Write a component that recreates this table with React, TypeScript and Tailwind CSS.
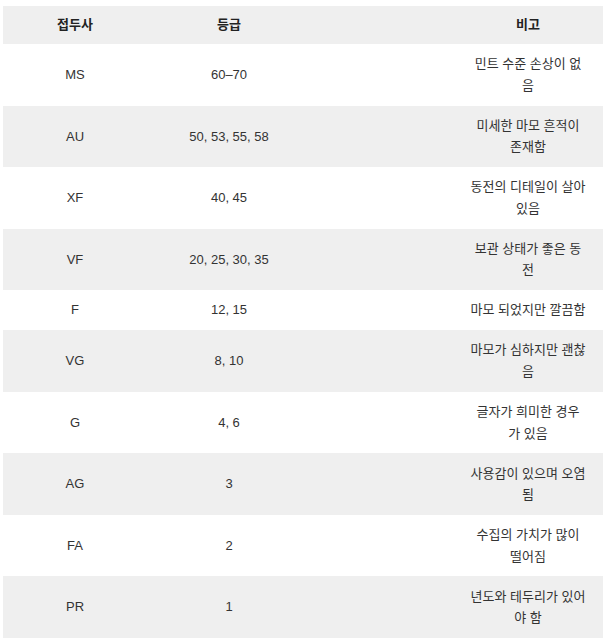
const rows: [string, string, string, string?][] = [
  ['MS', '60–70', '민트 수준 손상이 없', '음'],
  ['AU', '50, 53, 55, 58', '미세한 마모 흔적이', '존재함'],
  ['XF', '40, 45', '동전의 디테일이 살아', '있음'],
  ['VF', '20, 25, 30, 35', '보관 상태가 좋은 동', '전'],
  ['F', '12, 15', '마모 되었지만 깔끔함'],
  ['VG', '8, 10', '마모가 심하지만 괜찮', '음'],
  ['G', '4, 6', '글자가 희미한 경우', '가 있음'],
  ['AG', '3', '사용감이 있으며 오염', '됨'],
  ['FA', '2', '수집의 가치가 많이', '떨어짐'],
  ['PR', '1', '년도와 테두리가 있어', '야 함'],
]

export default function App() {
  return (
    <div className="w-[606px] h-[644px] bg-white pt-[6px] px-[3px] font-['Liberation_Sans','Noto_Sans_CJK_KR',sans-serif] text-[13px] text-[#333]">
      <table className="w-[600px] table-fixed border-collapse">
        <colgroup>
          <col className="w-[144px]" />
          <col className="w-[164px]" />
          <col className="w-[142px]" />
          <col className="w-[150px]" />
        </colgroup>
        <thead>
          <tr className="bg-[#efefef] text-[#222] font-bold">
            <th className="py-[9px] leading-[20px] text-center">접두사</th>
            <th className="py-[9px] leading-[20px] text-center">등급</th>
            <th />
            <th className="py-[9px] leading-[20px] text-center">비고</th>
          </tr>
        </thead>
        <tbody>
          {rows.map(([pre, grade, a, b], i) => (
            <tr key={pre} className={i % 2 === 1 ? 'bg-[#efefef]' : 'bg-white'}>
              <td className="py-[9.2px] leading-[21.6px] text-center">{pre}</td>
              <td className="py-[9.2px] leading-[21.6px] text-center">{grade}</td>
              <td />
              <td className="py-[9.2px] leading-[21.6px] text-center whitespace-nowrap">
                {a}
                {b && (
                  <>
                    <br />
                    {b}
                  </>
                )}
              </td>
            </tr>
          ))}
        </tbody>
      </table>
    </div>
  )
}
